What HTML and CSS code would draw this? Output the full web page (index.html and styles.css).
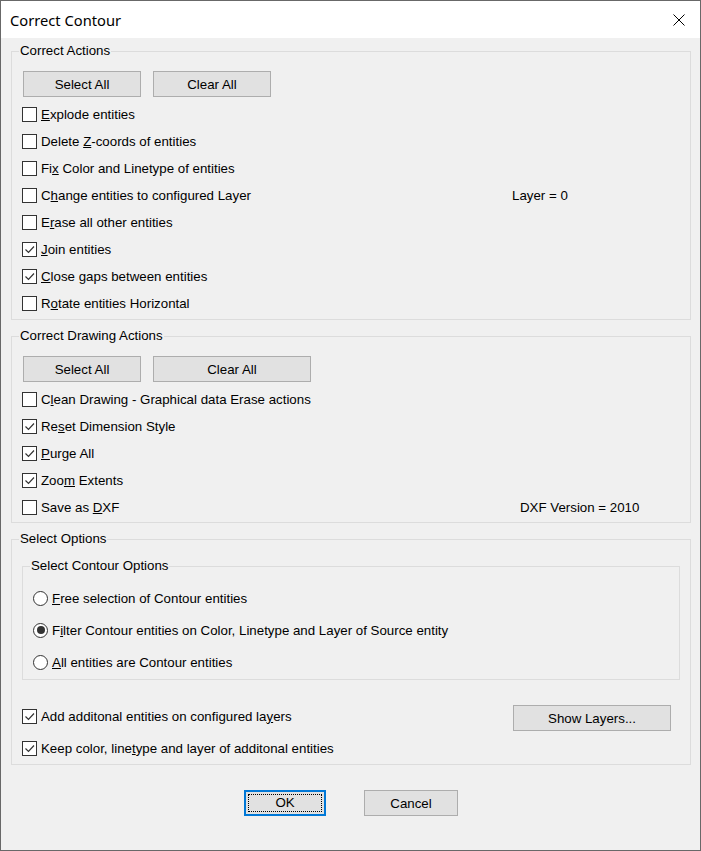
FILE: index.html
```html
<!DOCTYPE html>
<html lang="en">
<head>
    <meta charset="UTF-8">
    <title>Correct Contour</title>
    <link rel="stylesheet" href="styles.css">
</head>
<body>
    <div class="window">
        <div class="titlebar">
            <span class="title">Correct Contour</span>
            <svg class="close" width="12" height="12" viewBox="0 0 12 12">
                <path d="M0.5 0.5 L11.5 11.5 M11.5 0.5 L0.5 11.5" stroke="#000" stroke-width="1" fill="none"/>
            </svg>
        </div>

        <div class="dialog">
            <fieldset class="group">
                <legend>Correct Actions</legend>
                <div class="btn-row">
                    <button class="btn">Select All</button>
                    <button class="btn">Clear All</button>
                </div>
                <div class="rows">
                    <label class="row"><span class="box"></span><span><u>E</u>xplode entities</span></label>
                    <label class="row"><span class="box"></span><span>Delete <u>Z</u>-coords of entities</span></label>
                    <label class="row"><span class="box"></span><span>Fi<u>x</u> Color and Linetype of entities</span></label>
                    <label class="row"><span class="box"></span><span>C<u>h</u>ange entities to configured Layer</span><span class="side">Layer = 0</span></label>
                    <label class="row"><span class="box"></span><span>E<u>r</u>ase all other entities</span></label>
                    <label class="row"><span class="box checked"><svg viewBox="0 0 13 13"><path d="M2.5 6.5 L5.5 9.5 L11 3.5"/></svg></span><span><u>J</u>oin entities</span></label>
                    <label class="row"><span class="box checked"><svg viewBox="0 0 13 13"><path d="M2.5 6.5 L5.5 9.5 L11 3.5"/></svg></span><span><u>C</u>lose gaps between entities</span></label>
                    <label class="row"><span class="box"></span><span>R<u>o</u>tate entities Horizontal</span></label>
                </div>
            </fieldset>

            <fieldset class="group">
                <legend>Correct Drawing Actions</legend>
                <div class="btn-row">
                    <button class="btn">Select All</button>
                    <button class="btn wide">Clear All</button>
                </div>
                <div class="rows">
                    <label class="row"><span class="box"></span><span>C<u>l</u>ean Drawing - Graphical data Erase actions</span></label>
                    <label class="row"><span class="box checked"><svg viewBox="0 0 13 13"><path d="M2.5 6.5 L5.5 9.5 L11 3.5"/></svg></span><span>Re<u>s</u>et Dimension Style</span></label>
                    <label class="row"><span class="box checked"><svg viewBox="0 0 13 13"><path d="M2.5 6.5 L5.5 9.5 L11 3.5"/></svg></span><span><u>P</u>urge All</span></label>
                    <label class="row"><span class="box checked"><svg viewBox="0 0 13 13"><path d="M2.5 6.5 L5.5 9.5 L11 3.5"/></svg></span><span>Zoo<u>m</u> Extents</span></label>
                    <label class="row"><span class="box"></span><span>Save as <u>D</u>XF</span><span class="side dxf">DXF Version = 2010</span></label>
                </div>
            </fieldset>

            <fieldset class="group options">
                <legend>Select Options</legend>
                <fieldset class="group inner">
                    <legend>Select Contour Options</legend>
                    <label class="radio-row"><span class="radio"></span><span><u>F</u>ree selection of Contour entities</span></label>
                    <label class="radio-row"><span class="radio on"></span><span>F<u>i</u>lter Contour entities on Color, Linetype and Layer of Source entity</span></label>
                    <label class="radio-row"><span class="radio"></span><span><u>A</u>ll entities are Contour entities</span></label>
                </fieldset>
                <div class="row tall first">
                    <span class="box checked"><svg viewBox="0 0 13 13"><path d="M2.5 6.5 L5.5 9.5 L11 3.5"/></svg></span>
                    <span>Add additonal entities on configured la<u>y</u>ers</span>
                    <button class="btn layers">Show Layers...</button>
                </div>
                <div class="row tall">
                    <span class="box checked"><svg viewBox="0 0 13 13"><path d="M2.5 6.5 L5.5 9.5 L11 3.5"/></svg></span>
                    <span>Keep color, line<u>t</u>ype and layer of additonal entities</span>
                </div>
            </fieldset>

            <div class="footer">
                <button class="btn ok"><span>OK</span></button>
                <button class="btn cancel">Cancel</button>
            </div>
        </div>
    </div>
</body>
</html>
```

FILE: styles.css
```css
html, body {
    margin: 0;
    padding: 0;
}
body {
    font-family: "Liberation Sans", Arial, sans-serif;
    font-size: 13.3px;
    color: #000;
    background: #f0f0f0;
}
.window {
    width: 701px;
    height: 851px;
    box-sizing: border-box;
    border: 1px solid #686868;
    display: flex;
    flex-direction: column;
    background: #f0f0f0;
}
.titlebar {
    height: 37px;
    flex: none;
    background: #fff;
    display: flex;
    align-items: center;
    justify-content: space-between;
    padding: 0 15px 0 9px;
}
.title {
    font-family: "Noto Sans", sans-serif;
    font-size: 14.7px;
}
.close {
    display: block;
}
.dialog {
    flex: 1;
    padding: 5px 9px 0 10px;
}

/* group boxes */
.group {
    margin: 0;
    padding: 12px 10px 2px 10px;
    border: 1px solid #dcdcdc;
    min-width: 0;
}
.group + .group {
    margin-top: 8px;
}
.group legend {
    padding: 0 1px;
    margin-left: -3px;
    line-height: 16px;
}
.group:nth-of-type(2) {
    padding-bottom: 1px;
}
.options {
    padding: 11px 10px 0 10px;
}
.inner {
    padding: 8px 10px 1px 10px;
}
.group + .group.options {
    margin-top: 8px;
}

/* buttons */
.btn {
    font: inherit;
    color: #000;
    height: 26px;
    width: 118px;
    background: #e1e1e1;
    border: 1px solid #adadad;
    border-radius: 0;
    padding: 0;
    box-sizing: border-box;
}
.btn.wide {
    width: 158px;
}
.btn-row {
    display: flex;
    gap: 12px;
    margin-left: 1px;
}
.rows {
    margin-top: 4px;
}

/* checkbox rows */
.row {
    height: 27px;
    display: flex;
    align-items: center;
}
.row.tall {
    height: 32px;
}
.row.first {
    margin-top: 20px;
}
.box {
    width: 15px;
    height: 15px;
    box-sizing: border-box;
    border: 1px solid #333;
    background: #fff;
    margin-right: 4px;
    flex: none;
}
.box svg {
    display: block;
    width: 13px;
    height: 13px;
}
.box path {
    fill: none;
    stroke: #333;
    stroke-width: 1.2;
}
.side {
    margin-left: auto;
    width: 168px;
}
.side.dxf {
    width: 160px;
}
.layers {
    margin-left: auto;
    margin-right: 9px;
    margin-top: 4px;
    width: 158px;
}

/* radios */
.radio-row {
    height: 32px;
    display: flex;
    align-items: center;
}
.radio {
    width: 15px;
    height: 15px;
    box-sizing: border-box;
    border: 1px solid #333;
    border-radius: 50%;
    background: #fff;
    margin-right: 4px;
    flex: none;
    display: flex;
    align-items: center;
    justify-content: center;
}
.radio.on::after {
    content: "";
    width: 8px;
    height: 8px;
    border-radius: 50%;
    background: #333;
}

/* footer */
.footer {
    display: flex;
    justify-content: center;
    gap: 38px;
    margin-top: 25px;
}
.btn.ok {
    width: 82px;
    border: 2px solid #0078d7;
    padding: 2px;
}
.btn.ok span {
    display: block;
    height: 100%;
    outline: 1px dotted #000;
    outline-offset: -1px;
    line-height: 18px;
}
.btn.cancel {
    width: 94px;
}
```
